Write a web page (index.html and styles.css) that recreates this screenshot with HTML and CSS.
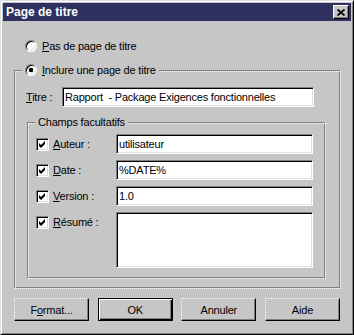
FILE: index.html
```html
<!DOCTYPE html>
<html lang="fr">
<head>
    <meta charset="UTF-8">
    <title>Page de titre</title>
    <link rel="stylesheet" href="styles.css">
</head>
<body>
    <div class="window">
        <div class="titlebar">
            <span class="title">Page de titre</span>
            <button class="close">
                <svg width="8" height="7" viewBox="0 0 8 7">
                    <path d="M0.5 0.5 L7.5 6.5 M7.5 0.5 L0.5 6.5" stroke="#000" stroke-width="1.8" fill="none"></path>
                </svg>
            </button>
        </div>

        <div class="content">
            <div class="radio-row">
                <span class="radio"></span>
                <span><u>P</u>as de page de titre</span>
            </div>

            <div class="group outer">
                <div class="legend">
                    <span class="radio on"></span>
                    <span><u>I</u>nclure une page de titre</span>
                </div>

                <div class="title-row">
                    <span class="title-label"><u>T</u>itre :</span>
                    <input class="edit title-edit" type="text" value="Rapport  - Package Exigences fonctionnelles">
                </div>

                <div class="group inner">
                    <div class="legend">Champs facultatifs</div>

                    <div class="check-row">
                        <div class="check-label">
                            <span class="checkbox"><svg width="7" height="7" viewBox="0 0 7 7"><polygon points="0,2 2,4 6,0 6,3 2,7 0,5" fill="#000"/></svg></span>
                            <span><u>A</u>uteur :</span>
                        </div>
                        <input class="edit" type="text" value="utilisateur">
                    </div>

                    <div class="check-row">
                        <div class="check-label">
                            <span class="checkbox"><svg width="7" height="7" viewBox="0 0 7 7"><polygon points="0,2 2,4 6,0 6,3 2,7 0,5" fill="#000"/></svg></span>
                            <span><u>D</u>ate :</span>
                        </div>
                        <input class="edit" type="text" value="%DATE%">
                    </div>

                    <div class="check-row">
                        <div class="check-label">
                            <span class="checkbox"><svg width="7" height="7" viewBox="0 0 7 7"><polygon points="0,2 2,4 6,0 6,3 2,7 0,5" fill="#000"/></svg></span>
                            <span><u>V</u>ersion :</span>
                        </div>
                        <input class="edit" type="text" value="1.0">
                    </div>

                    <div class="check-row">
                        <div class="check-label">
                            <span class="checkbox"><svg width="7" height="7" viewBox="0 0 7 7"><polygon points="0,2 2,4 6,0 6,3 2,7 0,5" fill="#000"/></svg></span>
                            <span><u>R</u>ésumé :</span>
                        </div>
                        <textarea class="edit memo"></textarea>
                    </div>
                </div>
            </div>

            <div class="buttons">
                <button class="btn">F<u>o</u>rmat...</button>
                <button class="btn default">OK</button>
                <button class="btn">Annuler</button>
                <button class="btn">Aide</button>
            </div>
        </div>
    </div>
</body>
</html>
```

FILE: styles.css
```css
body {
    margin: 0;
    font-family: "Liberation Sans", Arial, sans-serif;
    font-size: 11px;
    letter-spacing: -0.2px;
    color: #000;
    background: #c6c6c6;
}

.window {
    width: 354px;
    height: 335px;
    box-sizing: border-box;
    background: #c6c6c6;
    border: 1px solid;
    border-color: #dfdfdf #000 #000 #dfdfdf;
    box-shadow: inset 1px 1px #fff, inset -1px -1px #808080;
    padding: 2px;
}

.titlebar {
    height: 18px;
    background: #303060;
    color: #fff;
    display: flex;
    align-items: center;
    justify-content: space-between;
    padding: 0 2px 0 3px;
}

.title {
    font-weight: bold;
    font-size: 12px;
    letter-spacing: 0;
}

.close {
    width: 16px;
    height: 14px;
    box-sizing: border-box;
    padding: 0;
    background: #c6c6c6;
    border: 1px solid;
    border-color: #fff #000 #000 #fff;
    box-shadow: inset -1px -1px #808080;
    display: flex;
    align-items: center;
    justify-content: center;
}

.content {
    padding: 19px 10px 0 12px;
}

.radio-row {
    display: flex;
    align-items: center;
    gap: 5px;
    height: 12px;
    margin-left: 10px;
}

.radio {
    width: 12px;
    height: 12px;
    box-sizing: border-box;
    border-radius: 50%;
    background: #fff;
    border: 1px solid;
    border-color: #808080 #fff #fff #808080;
    box-shadow: inset 1px 1px #000, inset -1px -1px #dfdfdf;
    flex-shrink: 0;
}

.radio.on {
    background: radial-gradient(circle, #000 2px, #fff 2.6px);
}

.group {
    box-sizing: border-box;
    border: 1px dotted #fff;
    box-shadow: -1px -1px #808080, inset -1px -1px #808080;
}

.group.outer {
    margin-top: 19px;
    padding-bottom: 9px;
}

.group.inner {
    width: 298px;
    margin: 16px 0 0 12px;
    padding-bottom: 10px;
}

.legend {
    display: flex;
    align-items: center;
    gap: 5px;
    width: fit-content;
    height: 14px;
    margin: -9px 0 0 6px;
    padding: 0 3px;
    background: #c6c6c6;
}

.title-row {
    display: flex;
    align-items: center;
    margin: 10px 0 0 10px;
}

.title-label {
    width: 36px;
}

.edit {
    box-sizing: border-box;
    height: 20px;
    width: 197px;
    margin: 0;
    padding: 0 2px;
    background: #fff;
    border: 1px solid;
    border-color: #808080 #fff #fff #808080;
    box-shadow: inset 1px 1px #000, inset -1px -1px #dfdfdf;
    font: inherit;
    letter-spacing: inherit;
    color: #000;
    outline: none;
}

.title-edit {
    width: 252px;
}

.memo {
    height: 56px;
    resize: none;
}

.check-row {
    display: flex;
    align-items: flex-start;
    margin: 6px 0 0 7px;
}

.legend + .check-row {
    margin-top: 5px;
}

.check-label {
    display: flex;
    align-items: center;
    gap: 4px;
    width: 80px;
    height: 20px;
}

.checkbox {
    width: 13px;
    height: 13px;
    box-sizing: border-box;
    background: #fff;
    border: 1px solid;
    border-color: #808080 #fff #fff #808080;
    box-shadow: inset 1px 1px #000, inset -1px -1px #dfdfdf;
    display: flex;
    align-items: center;
    justify-content: center;
    flex-shrink: 0;
}

.buttons {
    display: flex;
    justify-content: space-between;
    width: 326px;
    margin: 9px 0 0 -1px;
}

.btn {
    width: 75px;
    height: 23px;
    box-sizing: border-box;
    padding: 0;
    background: #c6c6c6;
    border: 1px solid;
    border-style: dotted solid solid dotted;
    border-color: #fff #000 #000 #fff;
    box-shadow: inset -1px -1px #808080;
    font: inherit;
    letter-spacing: inherit;
    color: #000;
}

.btn.default {
    border: 1px solid #000;
    box-shadow: inset 1px 1px #fff, inset -1px -1px #000, inset -2px -2px #808080;
}
```
